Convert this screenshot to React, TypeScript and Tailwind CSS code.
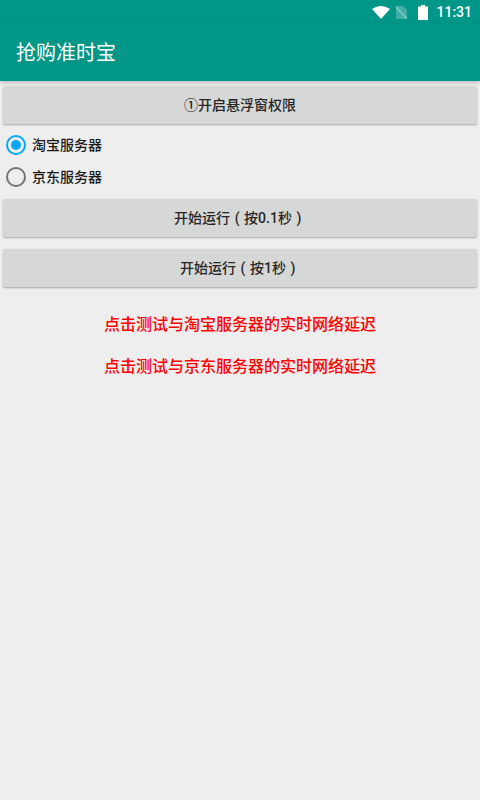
import React from 'react';

const font = "font-['Roboto','Noto_Sans_CJK_SC',sans-serif]";

const ActionButton = ({ children }: { children: React.ReactNode }) => (
  <button className="w-full h-[38px] flex items-center justify-center bg-[#d6d7d7] rounded-[2px] shadow-[0_1px_2px_rgba(0,0,0,0.3)] text-[14px] font-medium text-[#262626]">
    {children}
  </button>
);

// full width bracket, drawn centred in its cell
const Paren = ({ c }: { c: string }) => (
  <span className="inline-block w-[14px] text-center">{c}</span>
);

const Radio = ({ label, checked }: { label: string; checked?: boolean }) => (
  <div className="h-[32px] flex items-center pl-[3px]">
    <span className={`w-[20px] h-[20px] rounded-full border-2 flex items-center justify-center ${checked ? 'border-[#03a9f4]' : 'border-[#757575]'}`}>
      {checked && <span className="w-[10px] h-[10px] rounded-full bg-[#03a9f4]"></span>}
    </span>
    <span className="ml-[6px] text-[14px] font-medium text-[#1a1a1a]">{label}</span>
  </div>
);

const StatusBar = () => (
  <div className="h-[24px] bg-[#009688] flex items-center justify-end pr-[8px] text-white">
    <svg width="18" height="13" viewBox="0 0 18 13" className="mr-[6px]">
      <path d="M0 3 Q9 -3 18 3 L9 13 Z" fill="#fff" />
    </svg>
    <svg width="11" height="13" viewBox="0 0 11 13" className="mr-[11px]">
      <path d="M0 0 H7 L11 4 V13 H0 Z" fill="#fff" fillOpacity="0.25" />
      <path d="M0 1 L11 13" stroke="#fff" strokeOpacity="0.4" strokeWidth="1.3" />
    </svg>
    <svg width="10" height="15" viewBox="0 0 10 15" className="mr-[8px]">
      <path d="M3 0 H7 V1.5 H10 V15 H0 V1.5 H3 Z" fill="#fff" />
    </svg>
    <span className="text-[14px] font-medium leading-none">11:31</span>
  </div>
);

export default function App() {
  return (
    <div className={`w-[480px] h-[800px] bg-[#eeeeee] overflow-hidden ${font}`}>
      <StatusBar />
      <header className="h-[57px] bg-[#009688] flex items-center pl-[16px] shadow-[0_2px_4px_rgba(0,0,0,0.2)]">
        <h1 className="text-[20px] text-white">抢购准时宝</h1>
      </header>
      <main className="px-[3px] pt-[5px]">
        <ActionButton>①开启悬浮窗权限</ActionButton>
        <div className="pt-[5px] pb-[6px]">
          <Radio label="淘宝服务器" checked />
          <Radio label="京东服务器" />
        </div>
        <div className="flex flex-col gap-[12px]">
          <ActionButton>开始运行<Paren c="(" />按0.1秒<Paren c=")" /></ActionButton>
          <ActionButton>开始运行<Paren c="(" />按1秒<Paren c=")" /></ActionButton>
        </div>
        <div className="mt-[28px] flex flex-col items-center gap-[22px] text-[16px] font-medium text-[#ff0000]">
          <p className="h-[20px] leading-[20px]">点击测试与淘宝服务器的实时网络延迟</p>
          <p className="h-[20px] leading-[20px]">点击测试与京东服务器的实时网络延迟</p>
        </div>
      </main>
    </div>
  );
}
